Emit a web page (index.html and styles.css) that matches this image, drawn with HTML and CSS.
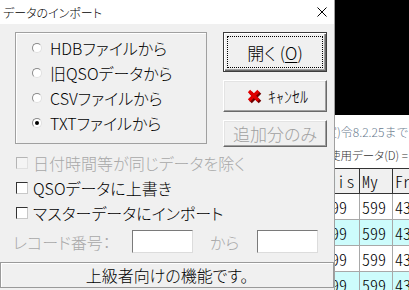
FILE: index.html
```html
<!DOCTYPE html>
<html lang="ja">
<head>
    <meta charset="UTF-8">
    <title>データのインポート</title>
    <link rel="stylesheet" href="styles.css">
</head>
<body>
    <div class="desk">
        <div class="app">
            <div class="app-top"></div>
            <p class="note">認定)令8.2.25まで</p>
            <p class="using">現在使用データ(D) =</p>
            <table class="grid">
                <tr class="head"><th>His</th><th>My</th><th>Freq</th></tr>
                <tr><td>599</td><td>599</td><td>430</td></tr>
                <tr class="alt"><td>599</td><td>599</td><td>430</td></tr>
                <tr><td>599</td><td>599</td><td>430</td></tr>
                <tr class="alt"><td>599</td><td>599</td><td>430</td></tr>
            </table>
        </div>

        <div class="dialog">
            <div class="titlebar">
                <span class="title">データのインポート</span>
                <svg class="close" width="10" height="10" viewBox="0 0 10 10">
                    <path d="M0.5 0.5 L9.5 9.5 M9.5 0.5 L0.5 9.5" stroke="#000" stroke-width="1" fill="none"/>
                </svg>
            </div>
            <div class="body">
                <div class="top">
                    <div class="group">
                        <div class="radio"><span class="dot"></span>HDBファイルから</div>
                        <div class="radio"><span class="dot"></span>旧QSOデータから</div>
                        <div class="radio"><span class="dot"></span>CSVファイルから</div>
                        <div class="radio"><span class="dot on"></span>TXTファイルから</div>
                    </div>
                    <div class="buttons">
                        <div class="btn btn-default"><span class="focus">開く (<u>O</u>)</span></div>
                        <div class="btn btn-cancel">
                            <svg width="15" height="15" viewBox="0 0 15 15">
                                <path d="M3.5 3.5 L13 13 M13 3.5 L3.5 13" stroke="#6e0000" stroke-width="3.6" fill="none"/>
                                <path d="M2 2 L11.5 11.5 M11.5 2 L2 11.5" stroke="#e00000" stroke-width="3.2" fill="none"/>
                            </svg>
                            <span>ｷｬﾝｾﾙ</span>
                        </div>
                        <div class="btn btn-off">追加分のみ</div>
                    </div>
                </div>
                <div class="checks">
                    <div class="check off"><span class="box"></span>日付時間等が同じデータを除く</div>
                    <div class="check"><span class="box"></span>QSOデータに上書き</div>
                    <div class="check"><span class="box"></span>マスターデータにインポート</div>
                </div>
                <div class="record">
                    <span class="rec-label">レコード番号：</span>
                    <span class="field"></span>
                    <span class="rec-from">から</span>
                    <span class="field"></span>
                </div>
                <div class="status">上級者向けの機能です。</div>
            </div>
        </div>
    </div>
</body>
</html>
```

FILE: styles.css
```css
body {
    margin: 0;
    font-family: 'Noto Sans CJK JP', sans-serif;
    font-feature-settings: "palt";
    font-weight: 300;
    overflow: hidden;
}
.desk {
    position: relative;
    width: 409px;
    height: 290px;
    overflow: hidden;
    background: #fff;
}

/* the app behind the dialog */
.app {
    width: 520px;
    display: flex;
    flex-direction: column;
    align-items: flex-start;
}
.app-top {
    align-self: stretch;
    height: 115px;
    background: #000;
}
.note {
    margin: 9px 0 0 313px;
    font-size: 12px;
    line-height: 16px;
    color: #687a8e;
    white-space: nowrap;
    font-feature-settings: normal;
}
.using {
    margin: 7px 0 0 306px;
    font-size: 11.5px;
    line-height: 16px;
    color: #333;
    white-space: nowrap;
}
.grid {
    width: 122px;
    margin: 5px 0 0 320px;
    border-collapse: collapse;
    font-size: 16px;
    font-feature-settings: "hwid";
    table-layout: fixed;
}
.grid th, .grid td {
    box-sizing: border-box;
    height: 26px;
    padding: 0 0 0 2px;
    text-align: left;
    font-weight: 300;
    border: 1px solid #a8a8a8;
}
.grid th {
    background: #f0f0f0;
    border-color: #333;
    height: 24px;
}
.grid th:first-child {
    text-align: right;
    padding-right: 3px;
    letter-spacing: 1.5px;
}
.grid tr th:nth-child(1), .grid tr td:nth-child(1) { width: 39px; }
.grid tr th:nth-child(2), .grid tr td:nth-child(2) { width: 33px; }
.grid tr th:nth-child(3), .grid tr td:nth-child(3) { width: 50px; }
.grid .alt td {
    background: #cdfcfc;
}

/* dialog window */
.dialog {
    position: absolute;
    left: 0;
    top: 0;
    width: 334px;
    height: 292px;
    background: #f0f0f0;
    border-right: 1px solid #a0a0a0;
    display: flex;
    flex-direction: column;
    color: #000;
}
.titlebar {
    height: 24px;
    background: #fff;
    display: flex;
    align-items: center;
    justify-content: space-between;
    padding: 0 7px 0 3px;
}
.title {
    font-size: 12px;
}
.body {
    display: flex;
    flex-direction: column;
    padding-top: 8px;
}
.top {
    display: flex;
    align-items: flex-start;
    padding-left: 15px;
    gap: 16px;
}
.group {
    box-sizing: border-box;
    width: 192px;
    height: 112px;
    border: 1px solid #a0a0a0;
    box-shadow: inset 1px 1px 0 #fff;
    padding-top: 2px;
}
.radio {
    height: 25px;
    display: flex;
    align-items: center;
    gap: 8px;
    padding-left: 16px;
    font-size: 16px;
}
.dot {
    box-sizing: border-box;
    width: 10px;
    height: 10px;
    border-radius: 50%;
    border: 1px solid #8a8a8a;
    border-bottom-color: #e0e0e0;
    border-right-color: #e0e0e0;
    background: #fff;
    display: flex;
    align-items: center;
    justify-content: center;
}
.dot.on::after {
    content: "";
    width: 4px;
    height: 4px;
    border-radius: 50%;
    background: #000;
}

.buttons {
    width: 104px;
    display: flex;
    flex-direction: column;
    gap: 8px;
}
.btn {
    box-sizing: border-box;
    display: flex;
    align-items: center;
    justify-content: center;
    background: #f0f0f0;
    border: 1px solid;
    border-color: #fff #696969 #696969 #fff;
    box-shadow: inset -1px -1px 0 #a0a0a0, inset 1px 1px 0 #e3e3e3;
    font-size: 16px;
}
.btn-default {
    height: 40px;
    border-color: #3c3c3c;
    box-shadow: inset 1px 1px 0 #fff, inset -1px -1px 0 #696969, inset -2px -2px 0 #a0a0a0;
    padding: 3px;
}
.focus {
    flex: 1;
    align-self: stretch;
    border: 1px dotted #000;
    display: flex;
    align-items: center;
    justify-content: center;
    font-size: 17px;
}
.focus u {
    text-underline-offset: 2px;
}
.btn-cancel {
    height: 32px;
    gap: 6px;
    padding-left: 5px;
}
.btn-cancel span {
    font-size: 16px;
    font-feature-settings: normal;
}
.btn-off {
    height: 27px;
    color: #a0a0a0;
    font-size: 17px;
}

.checks {
    margin-top: 3px;
    padding-left: 16px;
}
.check {
    height: 25px;
    display: flex;
    align-items: center;
    gap: 5px;
    font-size: 16px;
}
.box {
    box-sizing: border-box;
    width: 12px;
    height: 12px;
    background: #fff;
    border: 1px solid;
    border-color: #333 #c8c8c8 #c8c8c8 #333;
}
.check.off {
    color: #a8a8a8;
}
.check.off .box {
    background: #f4f4f4;
    border-color: #b4b4b4 #e0e0e0 #e0e0e0 #b4b4b4;
}

.record {
    height: 23px;
    margin-top: 5px;
    display: flex;
    align-items: center;
    padding-left: 13px;
    font-size: 16px;
    color: #a8a8a8;
}
.rec-label {
    width: 119px;
}
.field {
    box-sizing: border-box;
    width: 61px;
    height: 23px;
    background: #fff;
    border: 1px solid;
    border-color: #7a7a7a #dcdcdc #dcdcdc #7a7a7a;
}
.rec-from {
    width: 30px;
    margin: 0 17px;
}
.status {
    box-sizing: border-box;
    margin-top: 9px;
    height: 26px;
    border: 1px solid #9a9a9a;
    box-shadow: inset 1px 1px 0 #fff;
    display: flex;
    align-items: center;
    justify-content: center;
    font-size: 16px;
}
```
